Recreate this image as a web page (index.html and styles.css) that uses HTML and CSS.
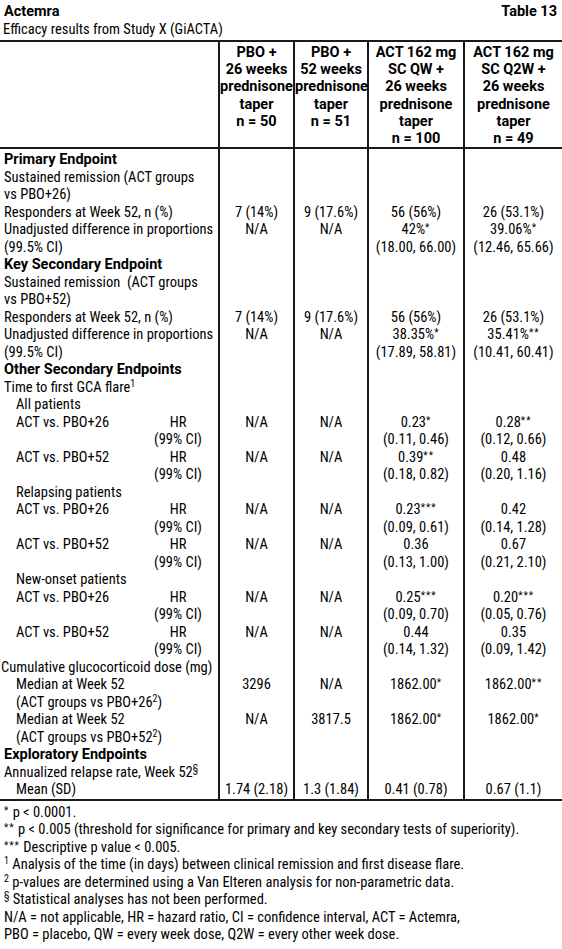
FILE: index.html
```html
<!DOCTYPE html>
<html lang="en">
<head>
    <meta charset="UTF-8">
    <meta name="viewport" content="width=device-width, initial-scale=1.0">
    <title>Actemra - Table 13</title>
    <link rel="stylesheet" href="styles.css">
</head>
<body>
    <main class="tablePage">
        <div class="docHead">
            <div>
                <h1 class="drugName">Actemra</h1>
                <p class="caption">Efficacy results from Study X (GiACTA)</p>
            </div>
            <div class="tableNo">Table 13</div>
        </div>

        <table class="results">
            <colgroup>
                <col class="colLabel">
                <col class="colHr">
                <col class="colPbo">
                <col class="colPbo2">
                <col class="colAct">
                <col class="colAct2">
            </colgroup>
            <thead>
                <tr>
                    <th colspan="2"></th>
                    <th>PBO +<br>26 weeks<br>prednisone<br>taper<br>n = 50</th>
                    <th>PBO +<br>52 weeks<br>prednisone<br>taper<br>n = 51</th>
                    <th>ACT 162 mg<br>SC QW +<br>26 weeks<br>prednisone<br>taper<br>n = 100</th>
                    <th>ACT 162 mg<br>SC Q2W +<br>26 weeks<br>prednisone<br>taper<br>n = 49</th>
                </tr>
            </thead>
            <tbody>
                <!-- Primary endpoint -->
                <tr class="firstRow">
                    <td colspan="2" class="label section">Primary Endpoint</td>
                    <td></td><td></td><td></td><td></td>
                </tr>
                <tr>
                    <td colspan="2" class="label">Sustained remission (ACT groups<br>vs PBO+26)</td>
                    <td></td><td></td><td></td><td></td>
                </tr>
                <tr>
                    <td colspan="2" class="label">Responders at Week 52, n (%)</td>
                    <td>7 (14%)</td><td>9 (17.6%)</td><td>56 (56%)</td><td>26 (53.1%)</td>
                </tr>
                <tr>
                    <td colspan="2" class="label">Unadjusted difference in proportions<br>(99.5% CI)</td>
                    <td>N/A</td><td>N/A</td>
                    <td>42%<sup>*</sup><br>(18.00, 66.00)</td>
                    <td>39.06%<sup>*</sup><br>(12.46, 65.66)</td>
                </tr>

                <!-- Key secondary endpoint -->
                <tr>
                    <td colspan="2" class="label section">Key Secondary Endpoint</td>
                    <td></td><td></td><td></td><td></td>
                </tr>
                <tr>
                    <td colspan="2" class="label">Sustained remission &nbsp;(ACT groups<br>vs PBO+52)</td>
                    <td></td><td></td><td></td><td></td>
                </tr>
                <tr>
                    <td colspan="2" class="label">Responders at Week 52, n (%)</td>
                    <td>7 (14%)</td><td>9 (17.6%)</td><td>56 (56%)</td><td>26 (53.1%)</td>
                </tr>
                <tr>
                    <td colspan="2" class="label">Unadjusted difference in proportions<br>(99.5% CI)</td>
                    <td>N/A</td><td>N/A</td>
                    <td>38.35%<sup>*</sup><br>(17.89, 58.81)</td>
                    <td>35.41%<sup>**</sup><br>(10.41, 60.41)</td>
                </tr>

                <!-- Other secondary endpoints -->
                <tr>
                    <td colspan="2" class="label section">Other Secondary Endpoints</td>
                    <td></td><td></td><td></td><td></td>
                </tr>
                <tr>
                    <td colspan="2" class="label">Time to first GCA flare<sup class="ref">1</sup></td>
                    <td></td><td></td><td></td><td></td>
                </tr>
                <tr>
                    <td colspan="2" class="label indent">All patients</td>
                    <td></td><td></td><td></td><td></td>
                </tr>
                <tr>
                    <td class="label indent">ACT vs. PBO+26</td>
                    <td class="hr">HR<br>(99% CI)</td>
                    <td>N/A</td><td>N/A</td>
                    <td>0.23<sup>*</sup><br>(0.11, 0.46)</td>
                    <td>0.28<sup>**</sup><br>(0.12, 0.66)</td>
                </tr>
                <tr>
                    <td class="label indent">ACT vs. PBO+52</td>
                    <td class="hr">HR<br>(99% CI)</td>
                    <td>N/A</td><td>N/A</td>
                    <td>0.39<sup>**</sup><br>(0.18, 0.82)</td>
                    <td>0.48<br>(0.20, 1.16)</td>
                </tr>
                <tr>
                    <td colspan="2" class="label indent">Relapsing patients</td>
                    <td></td><td></td><td></td><td></td>
                </tr>
                <tr>
                    <td class="label indent">ACT vs. PBO+26</td>
                    <td class="hr">HR<br>(99% CI)</td>
                    <td>N/A</td><td>N/A</td>
                    <td>0.23<sup>***</sup><br>(0.09, 0.61)</td>
                    <td>0.42<br>(0.14, 1.28)</td>
                </tr>
                <tr>
                    <td class="label indent">ACT vs. PBO+52</td>
                    <td class="hr">HR<br>(99% CI)</td>
                    <td>N/A</td><td>N/A</td>
                    <td>0.36<br>(0.13, 1.00)</td>
                    <td>0.67<br>(0.21, 2.10)</td>
                </tr>
                <tr>
                    <td colspan="2" class="label indent">New-onset patients</td>
                    <td></td><td></td><td></td><td></td>
                </tr>
                <tr>
                    <td class="label indent">ACT vs. PBO+26</td>
                    <td class="hr">HR<br>(99% CI)</td>
                    <td>N/A</td><td>N/A</td>
                    <td>0.25<sup>***</sup><br>(0.09, 0.70)</td>
                    <td>0.20<sup>***</sup><br>(0.05, 0.76)</td>
                </tr>
                <tr>
                    <td class="label indent">ACT vs. PBO+52</td>
                    <td class="hr">HR<br>(99% CI)</td>
                    <td>N/A</td><td>N/A</td>
                    <td>0.44<br>(0.14, 1.32)</td>
                    <td>0.35<br>(0.09, 1.42)</td>
                </tr>
                <tr>
                    <td colspan="2" class="label tight">Cumulative glucocorticoid dose (mg)</td>
                    <td></td><td></td><td></td><td></td>
                </tr>
                <tr>
                    <td colspan="2" class="label indent">Median at Week 52<br>(ACT groups vs PBO+26<sup class="ref">2</sup>)</td>
                    <td>3296</td><td>N/A</td>
                    <td>1862.00<sup>*</sup></td>
                    <td>1862.00<sup>**</sup></td>
                </tr>
                <tr>
                    <td colspan="2" class="label indent">Median at Week 52<br>(ACT groups vs PBO+52<sup class="ref">2</sup>)</td>
                    <td>N/A</td><td>3817.5</td>
                    <td>1862.00<sup>*</sup></td>
                    <td>1862.00<sup>*</sup></td>
                </tr>

                <!-- Exploratory endpoints -->
                <tr>
                    <td colspan="2" class="label section">Exploratory Endpoints</td>
                    <td></td><td></td><td></td><td></td>
                </tr>
                <tr>
                    <td colspan="2" class="label">Annualized relapse rate, Week 52<sup class="ref">§</sup></td>
                    <td></td><td></td><td></td><td></td>
                </tr>
                <tr>
                    <td colspan="2" class="label indent">Mean (SD)</td>
                    <td>1.74 (2.18)</td><td>1.3 (1.84)</td><td>0.41 (0.78)</td><td>0.67 (1.1)</td>
                </tr>
            </tbody>
        </table>

        <div class="notes">
            <p><sup>*</sup> p &lt; 0.0001.</p>
            <p><sup>**</sup> p &lt; 0.005 (threshold for significance for primary and key secondary tests of superiority).</p>
            <p><sup>***</sup> Descriptive p value &lt; 0.005.</p>
            <p><sup class="ref">1</sup> Analysis of the time (in days) between clinical remission and first disease flare.</p>
            <p><sup class="ref">2</sup> p-values are determined using a Van Elteren analysis for non-parametric data.</p>
            <p><sup class="ref">§</sup> Statistical analyses has not been performed.</p>
            <p>N/A = not applicable, HR = hazard ratio, CI = confidence interval, ACT = Actemra,</p>
            <p>PBO = placebo, QW = every week dose, Q2W = every other week dose.</p>
        </div>
    </main>
</body>
</html>
```

FILE: styles.css
```css
* {
    margin: 0;
    padding: 0;
    box-sizing: border-box;
}
body {
    background-color: #ffffff;
    color: #000000;
    font-family: Roboto, "Liberation Sans", sans-serif;
    font-stretch: 75%;
    font-weight: 450;
    font-size: 14.5px;
    line-height: 17.5px;
}
.tablePage {
    width: 562px;
}
.docHead {
    display: flex;
    justify-content: space-between;
    padding: 3px 5px 0 4px;
}
.drugName, .tableNo {
    font-size: 14.5px;
    font-weight: bold;
    font-stretch: 88%;
}
.caption {
    margin-left: -1px;
}

/* table */
.results {
    width: 100%;
    margin-top: 2px;
    border-collapse: collapse;
    table-layout: fixed;
    border-top: 2px solid #1a1a1a;
    border-bottom: 2px solid #1a1a1a;
}
.colLabel { width: 150px; }
.colHr { width: 69px; }
.colPbo { width: 75px; }
.colPbo2 { width: 74px; }
.colAct { width: 96px; }
.colAct2 { width: 98px; }

.results th {
    font-weight: bold;
    font-stretch: 92%;
    line-height: 17.2px;
    text-align: center;
    vertical-align: top;
    padding-top: 2px;
    border-bottom: 2px solid #1a1a1a;
    white-space: nowrap;
}
.results th + th,
.results td + td {
    border-left: 2px solid #1a1a1a;
}
.results td {
    text-align: center;
    vertical-align: top;
    white-space: nowrap;
}
.results td.label {
    text-align: left;
    padding-left: 4px;
}
.results td.hr {
    border-left: none;
    text-align: center;
    padding-right: 12px;
}
.results td.hr + td {
    border-left: 2px solid #1a1a1a;
}
.results td.indent {
    padding-left: 16px;
}
.results td.tight {
    padding-left: 1px;
}
.results .section {
    font-weight: bold;
    font-stretch: 92%;
}
.firstRow td {
    padding-top: 2px;
}

sup {
    font-size: 10px;
    line-height: 0;
    vertical-align: 3px;
    letter-spacing: 1px;
}
sup.ref {
    letter-spacing: 0;
    vertical-align: 5px;
}

/* footnotes */
.notes {
    padding: 3px 0 0 4px;
}
```
